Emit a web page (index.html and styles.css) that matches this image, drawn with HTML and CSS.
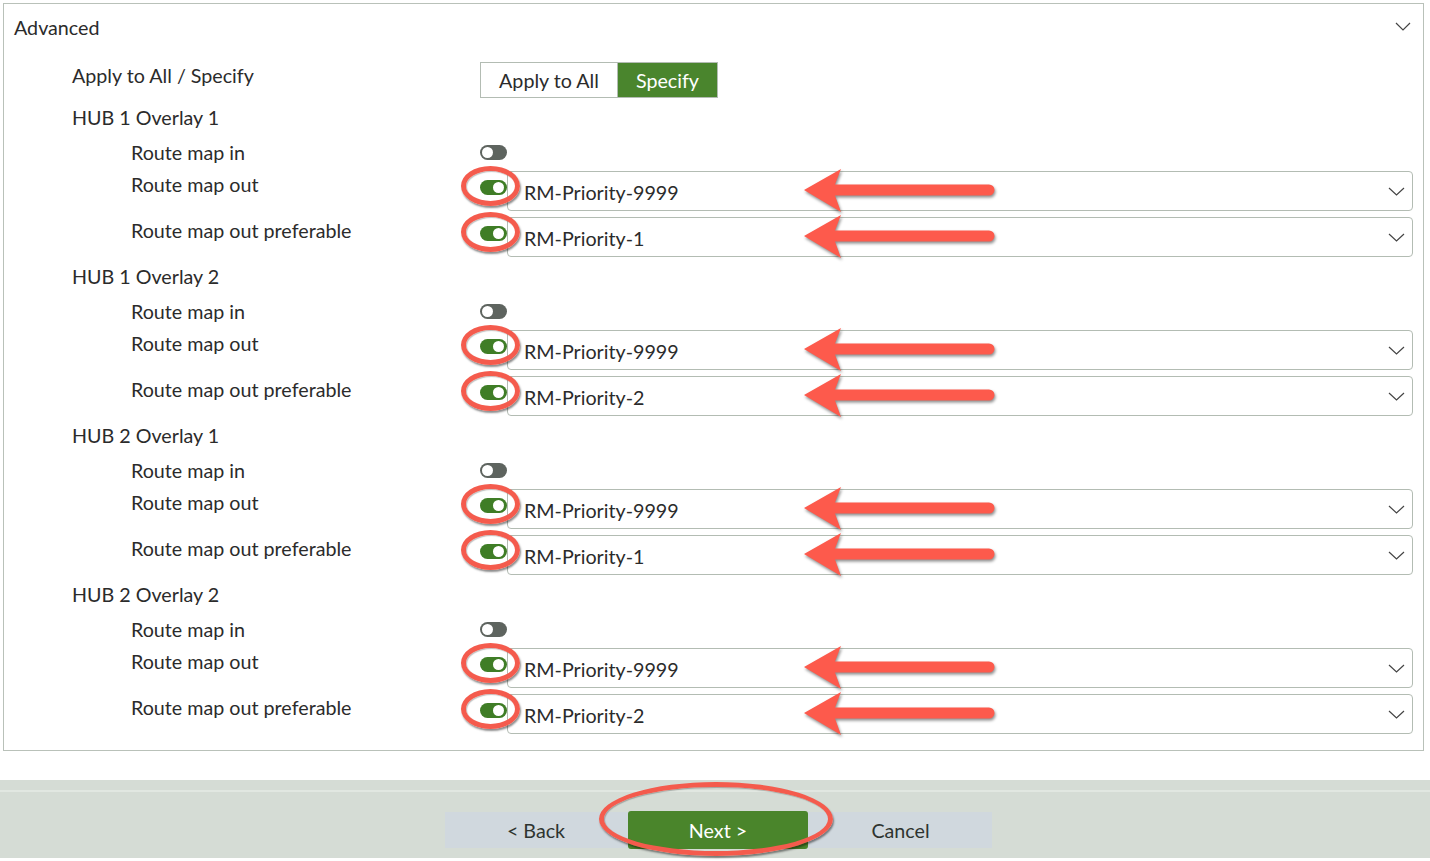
FILE: index.html
```html
<!DOCTYPE html>
<html>
<head>
<meta charset="utf-8">
<link rel="stylesheet" href="styles.css">
</head>
<body>
<div class="panel">
  <div class="panel-head">
    <span>Advanced</span>
    <svg class="chev-head" width="16" height="9" viewBox="0 0 16 9"><path d="M1 1 L8 8 L15 1" fill="none" stroke="#444" stroke-width="1.2"/></svg>
  </div>

  <div class="row apply">
    <div class="lbl l1">Apply to All / Specify</div>
    <div class="ctrl">
      <div class="seg"><span class="seg-a">Apply to All</span><span class="seg-b">Specify</span></div>
    </div>
  </div>

  <div class="group">
    <div class="row head"><div class="lbl l1">HUB 1 Overlay 1</div></div>
    <div class="row in"><div class="lbl l2">Route map in</div><div class="ctrl"><span class="tog off"></span></div></div>
    <div class="row sel"><div class="lbl l2">Route map out</div><div class="ctrl"><span class="ring"></span><span class="tog on"></span><div class="select"><span>RM-Priority-9999</span><svg class="arrow" width="196" height="46" viewBox="0 0 196 46"><path d="M2 22 L39 1 L33 16.5 L187 16.5 A5.5 5.5 0 0 1 187 27.5 L33 27.5 L39 44 Z"/></svg><svg class="chev" width="17" height="9" viewBox="0 0 17 9"><path d="M1 1 L8.5 8 L16 1" fill="none" stroke="#444" stroke-width="1.2"/></svg></div></div></div>
    <div class="row sel"><div class="lbl l2">Route map out preferable</div><div class="ctrl"><span class="ring"></span><span class="tog on"></span><div class="select"><span>RM-Priority-1</span><svg class="arrow" width="196" height="46" viewBox="0 0 196 46"><path d="M2 22 L39 1 L33 16.5 L187 16.5 A5.5 5.5 0 0 1 187 27.5 L33 27.5 L39 44 Z"/></svg><svg class="chev" width="17" height="9" viewBox="0 0 17 9"><path d="M1 1 L8.5 8 L16 1" fill="none" stroke="#444" stroke-width="1.2"/></svg></div></div></div>
  </div>

  <div class="group">
    <div class="row head"><div class="lbl l1">HUB 1 Overlay 2</div></div>
    <div class="row in"><div class="lbl l2">Route map in</div><div class="ctrl"><span class="tog off"></span></div></div>
    <div class="row sel"><div class="lbl l2">Route map out</div><div class="ctrl"><span class="ring"></span><span class="tog on"></span><div class="select"><span>RM-Priority-9999</span><svg class="arrow" width="196" height="46" viewBox="0 0 196 46"><path d="M2 22 L39 1 L33 16.5 L187 16.5 A5.5 5.5 0 0 1 187 27.5 L33 27.5 L39 44 Z"/></svg><svg class="chev" width="17" height="9" viewBox="0 0 17 9"><path d="M1 1 L8.5 8 L16 1" fill="none" stroke="#444" stroke-width="1.2"/></svg></div></div></div>
    <div class="row sel"><div class="lbl l2">Route map out preferable</div><div class="ctrl"><span class="ring"></span><span class="tog on"></span><div class="select"><span>RM-Priority-2</span><svg class="arrow" width="196" height="46" viewBox="0 0 196 46"><path d="M2 22 L39 1 L33 16.5 L187 16.5 A5.5 5.5 0 0 1 187 27.5 L33 27.5 L39 44 Z"/></svg><svg class="chev" width="17" height="9" viewBox="0 0 17 9"><path d="M1 1 L8.5 8 L16 1" fill="none" stroke="#444" stroke-width="1.2"/></svg></div></div></div>
  </div>

  <div class="group">
    <div class="row head"><div class="lbl l1">HUB 2 Overlay 1</div></div>
    <div class="row in"><div class="lbl l2">Route map in</div><div class="ctrl"><span class="tog off"></span></div></div>
    <div class="row sel"><div class="lbl l2">Route map out</div><div class="ctrl"><span class="ring"></span><span class="tog on"></span><div class="select"><span>RM-Priority-9999</span><svg class="arrow" width="196" height="46" viewBox="0 0 196 46"><path d="M2 22 L39 1 L33 16.5 L187 16.5 A5.5 5.5 0 0 1 187 27.5 L33 27.5 L39 44 Z"/></svg><svg class="chev" width="17" height="9" viewBox="0 0 17 9"><path d="M1 1 L8.5 8 L16 1" fill="none" stroke="#444" stroke-width="1.2"/></svg></div></div></div>
    <div class="row sel"><div class="lbl l2">Route map out preferable</div><div class="ctrl"><span class="ring"></span><span class="tog on"></span><div class="select"><span>RM-Priority-1</span><svg class="arrow" width="196" height="46" viewBox="0 0 196 46"><path d="M2 22 L39 1 L33 16.5 L187 16.5 A5.5 5.5 0 0 1 187 27.5 L33 27.5 L39 44 Z"/></svg><svg class="chev" width="17" height="9" viewBox="0 0 17 9"><path d="M1 1 L8.5 8 L16 1" fill="none" stroke="#444" stroke-width="1.2"/></svg></div></div></div>
  </div>

  <div class="group">
    <div class="row head"><div class="lbl l1">HUB 2 Overlay 2</div></div>
    <div class="row in"><div class="lbl l2">Route map in</div><div class="ctrl"><span class="tog off"></span></div></div>
    <div class="row sel"><div class="lbl l2">Route map out</div><div class="ctrl"><span class="ring"></span><span class="tog on"></span><div class="select"><span>RM-Priority-9999</span><svg class="arrow" width="196" height="46" viewBox="0 0 196 46"><path d="M2 22 L39 1 L33 16.5 L187 16.5 A5.5 5.5 0 0 1 187 27.5 L33 27.5 L39 44 Z"/></svg><svg class="chev" width="17" height="9" viewBox="0 0 17 9"><path d="M1 1 L8.5 8 L16 1" fill="none" stroke="#444" stroke-width="1.2"/></svg></div></div></div>
    <div class="row sel"><div class="lbl l2">Route map out preferable</div><div class="ctrl"><span class="ring"></span><span class="tog on"></span><div class="select"><span>RM-Priority-2</span><svg class="arrow" width="196" height="46" viewBox="0 0 196 46"><path d="M2 22 L39 1 L33 16.5 L187 16.5 A5.5 5.5 0 0 1 187 27.5 L33 27.5 L39 44 Z"/></svg><svg class="chev" width="17" height="9" viewBox="0 0 17 9"><path d="M1 1 L8.5 8 L16 1" fill="none" stroke="#444" stroke-width="1.2"/></svg></div></div></div>
  </div>
</div>

<div class="footer">
  <div class="footer-inner">
    <div class="btnbar">
      <span class="btn">&lt; Back</span>
      <span class="btn next">Next &gt;<span class="ring big"></span></span>
      <span class="btn">Cancel</span>
    </div>
  </div>
</div>
</body>
</html>
```

FILE: styles.css
```css
* { box-sizing: border-box; }
html, body { margin: 0; padding: 0; background: #fff; }
body {
  font-family: Lato, "Open Sans", sans-serif;
  color: #2b2b2b;
  font-size: 19.7px;
  width: 1430px;
  height: 861px;
  overflow: hidden;
}
.panel {
  margin: 3px 0 0 3px;
  width: 1421px;
  border: 1px solid #b9c1b9;
  padding: 0 10px 12px 0;
}
.panel-head {
  height: 47px;
  display: flex;
  align-items: center;
  justify-content: space-between;
  padding-left: 10px;
}
.chev-head { margin-right: 2px; margin-top: -2px; }
.row {
  display: grid;
  grid-template-columns: 476px 1fr;
}
.lbl { line-height: 28px; white-space: nowrap; }
.l1 { padding-left: 68px; }
.l2 { padding-left: 127px; }
.apply { margin-top: 11px; height: 35px; }
.seg {
  display: inline-flex;
  height: 36px;
  border: 1px solid #b3bcb3;
  font-size: 19.7px;
}
.seg span { display: flex; align-items: center; }
.seg-a { width: 137px; justify-content: center; background: #fff; border-right: 1px solid #b3bcb3; }
.seg-b { width: 99px; justify-content: center; background: #4a852d; color: #fff; }
.apply + .group { margin-top: 5px; }
.group { display: block; }
.head { height: 34px; }
.head .lbl { line-height: 32px; }
.in { height: 33px; align-items: center; }
.in .lbl { line-height: 33px; }
.ctrl { display: flex; align-items: center; position: relative; }
.sel { height: 46px; padding-top: 2px; }
.sel .ctrl { align-items: flex-start; }
.sel .tog { margin-top: 9px; }
.tog {
  flex: none;
  width: 27px;
  height: 15px;
  border-radius: 8px;
  position: relative;
  display: inline-block;
}
.tog::after {
  content: "";
  position: absolute;
  top: 2px;
  width: 11px;
  height: 11px;
  border-radius: 50%;
  background: #fff;
}
.tog.off { background: #5e645f; }
.tog.off::after { left: 2px; }
.tog.on { background: #3f7d26; }
.tog.on::after { right: 3px; }
.select {
  flex: 1;
  height: 40px;
  border: 1px solid #b3bcb3;
  border-radius: 4px;
  display: flex;
  align-items: center;
  justify-content: space-between;
  padding: 0 7px 0 16px;
  position: relative;
  background: #fff;
}
.select span { position: relative; top: 1px; }
.chev { margin-top: 1px; }
.arrow {
  position: absolute;
  left: 294px;
  top: 50%;
  margin-top: -23px;
  fill: #fd5a4c;
  filter: drop-shadow(1px 2px 1.5px rgba(0,0,0,0.45));
  z-index: 2;
}
.ring {
  position: absolute;
  left: -19px;
  top: -5px;
  width: 59px;
  height: 40px;
  border: 5px solid #f45b4d;
  border-radius: 50%;
  box-shadow: 1px 2px 2px rgba(0,0,0,0.45), inset 1px 1px 1px rgba(0,0,0,0.25);
  z-index: 3;
}
.footer {
  margin-top: 29px;
  height: 78px;
  background: #d5dcd5;
  padding-top: 10px;
}
.footer-inner {
  border-top: 2px solid #e1e7e1;
  height: 100%;
  padding-top: 20px;
}
.btnbar {
  margin-left: 445px;
  width: 547px;
  height: 36px;
  background: #d0d8de;
  display: grid;
  grid-template-columns: 182px 182px 183px;
}
.btn {
  display: flex;
  align-items: center;
  justify-content: center;
  font-size: 19.7px;
  color: #2e3430;
  position: relative;
}
.btn.next {
  background: #4a852b;
  color: #fff;
  border-radius: 3px;
  height: 38px;
  margin: -1px 1px 0 1px;
}
.ring.big {
  left: -29px;
  top: -29px;
  width: 234px;
  height: 74px;
  border-width: 5px;
}
```
